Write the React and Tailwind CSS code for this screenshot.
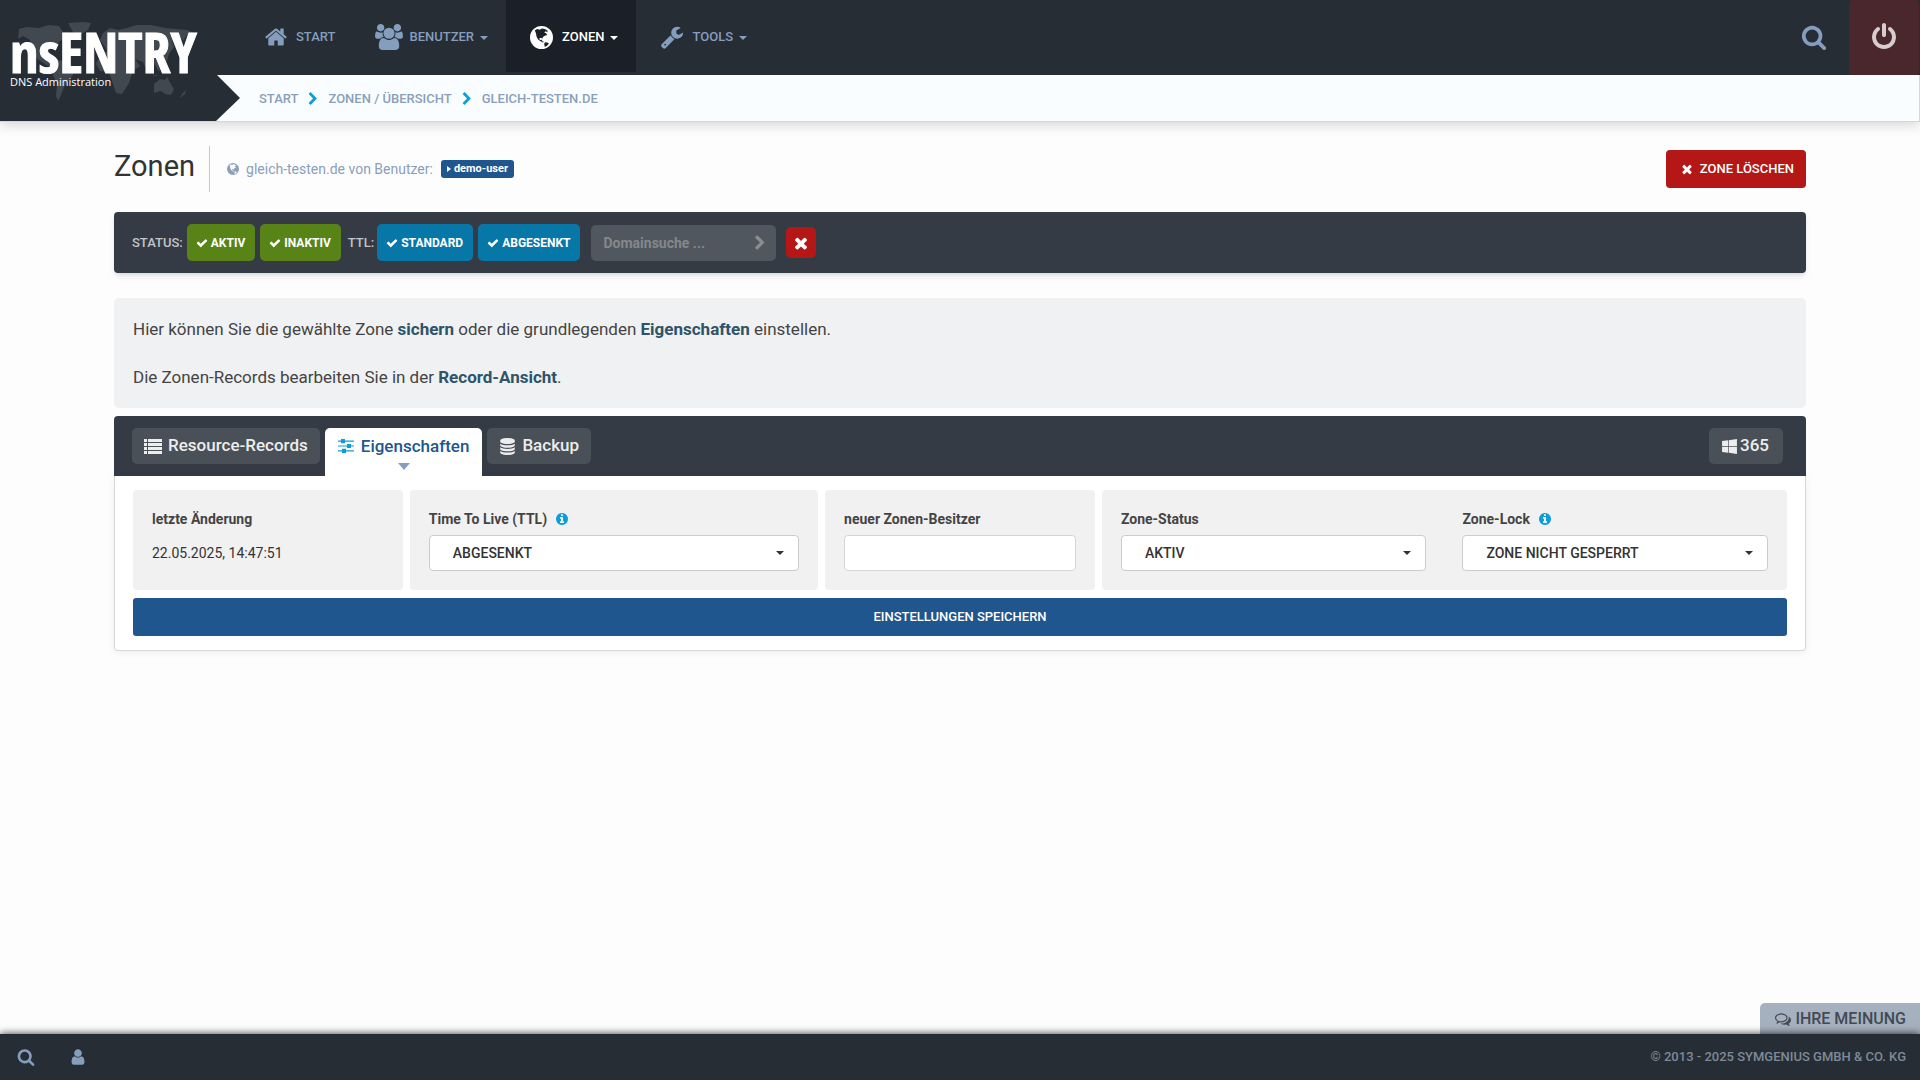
import { FaWindows } from 'react-icons/fa';
import clsx from 'clsx';

const ICONS = {
  home: 'M1472 992v480q0 26-19 45t-45 19h-384v-384h-256v384h-384q-26 0-45-19t-19-45v-480q0-1 .5-3t.5-3l575-474 575 474q1 2 1 6zm223-69l-62 74q-8 9-21 11h-3q-13 0-21-7l-692-577-692 577q-12 8-24 7-13-2-21-11l-62-74q-8-10-7-23.5t11-21.5l719-599q32-26 76-26t76 26l244 204v-195q0-14 9-23t23-9h192q14 0 23 9t9 23v408l219 182q10 8 11 21.5t-7 23.5z',
  users:
    'M593 896q-162 5-265 128h-134q-82 0-138-40.5t-56-118.5q0-353 124-353 6 0 43.5 21t97.5 42.5 119 21.5q67 0 133-23-5 37-5 66 0 139 81 256zm1071 637q0 120-73 189.5t-194 69.5h-874q-121 0-194-69.5t-73-189.5q0-53 3.5-103.5t14-109 26.5-108.5 43-97.5 62-81 85.5-53.5 111.5-20q10 0 43 21.5t73 48 107 48 135 21.5 135-21.5 107-48 73-48 43-21.5q61 0 111.5 20t85.5 53.5 62 81 43 97.5 26.5 108.5 14 109 3.5 103.5zm-1024-1277q0 106-75 181t-181 75-181-75-75-181 75-181 181-75 181 75 75 181zm704 384q0 159-112.5 271.5t-271.5 112.5-271.5-112.5-112.5-271.5 112.5-271.5 271.5-112.5 271.5 112.5 112.5 271.5zm576 225q0 78-56 118.5t-138 40.5h-134q-103-123-265-128 81-117 81-256 0-29-5-66 66 23 133 23 59 0 119-21.5t97.5-42.5 43.5-21q124 0 124 353zm-128-609q0 106-75 181t-181 75-181-75-75-181 75-181 181-75 181 75 75 181z',
  wrench:
    'M448 1472q0-26-19-45t-45-19-45 19-19 45 19 45 45 19 45-19 19-45zm644-420l-682 682q-37 37-90 37-52 0-91-37l-106-108q-38-36-38-90 0-53 38-91l681-681q39 98 114.5 173.5t173.5 114.5zm634-435q0 39-23 106-47 134-164.5 217.5t-258.5 83.5q-185 0-316.5-131.5t-131.5-316.5 131.5-316.5 316.5-131.5q58 0 121.5 16.5t107.5 46.5q16 11 16 28t-16 28l-293 169v224l193 107q5-3 79-48.5t135.5-81 70.5-35.5q15 0 23.5 10t8.5 25z',
  search:
    'M1216 832q0-185-131.5-316.5t-316.5-131.5-316.5 131.5-131.5 316.5 131.5 316.5 316.5 131.5 316.5-131.5 131.5-316.5zm512 832q0 52-38 90t-90 38q-54 0-90-38l-343-342q-179 124-399 124-143 0-273.5-55.5t-225-150-150-225-55.5-273.5 55.5-273.5 150-225 225-150 273.5-55.5 273.5 55.5 225 150 150 225 55.5 273.5q0 220-124 399l343 343q37 37 37 90z',
  power:
    'M1664 896q0 156-61 298t-164 245-245 164-298 61-298-61-245-164-164-245-61-298q0-182 80.5-343t226.5-270q43-32 95.5-25t83.5 50q32 42 24.5 94.5t-49.5 84.5q-98 74-151.5 181t-53.5 228q0 104 40.5 198.5t109.5 163.5 163.5 109.5 198.5 40.5 198.5-40.5 163.5-109.5 109.5-163.5 40.5-198.5q0-121-53.5-228t-151.5-181q-42-32-49.5-84.5t24.5-94.5q31-43 84-50t95 25q146 109 226.5 270t80.5 343zm-640-768v640q0 52-38 90t-90 38-90-38-38-90v-640q0-52 38-90t90-38 90 38 38 90z',
  check:
    'M1671 566q0 40-28 68l-724 724-136 136q-28 28-68 28t-68-28l-136-136-362-362q-28-28-28-68t28-68l136-136q28-28 68-28t68 28l294 295 656-657q28-28 68-28t68 28l136 136q28 28 28 68z',
  times:
    'M1490 1322q0 40-28 68l-136 136q-28 28-68 28t-68-28l-294-294-294 294q-28 28-68 28t-68-28l-136-136q-28-28-28-68t28-68l294-294-294-294q-28-28-28-68t28-68l136-136q28-28 68-28t68 28l294 294 294-294q28-28 68-28t68 28l136 136q28 28 28 68t-28 68l-294 294 294 294q28 28 28 68z',
  chevron:
    'M1363 877l-742 742q-19 19-45 19t-45-19l-166-166q-19-19-19-45t19-45l531-531-531-531q-19-19-19-45t19-45l166-166q19-19 45-19t45 19l742 742q19 19 19 45t-19 45z',
  user: 'M1536 1399q0 109-62.5 187t-150.5 78h-854q-88 0-150.5-78t-62.5-187q0-85 8.5-160.5t31.5-152 58.5-131 94-89 134.5-34.5q131 128 313 128t313-128q76 0 134.5 34.5t94 89 58.5 131 31.5 152 8.5 160.5zm-256-887q0 159-112.5 271.5t-271.5 112.5-271.5-112.5-112.5-271.5 112.5-271.5 271.5-112.5 271.5 112.5 112.5 271.5z',
  info: 'M1152 1376v-160q0-14-9-23t-23-9h-96v-512q0-14-9-23t-23-9h-320q-14 0-23 9t-9 23v160q0 14 9 23t23 9h96v320h-96q-14 0-23 9t-9 23v160q0 14 9 23t23 9h448q14 0 23-9t9-23zm-128-896v-160q0-14-9-23t-23-9h-192q-14 0-23 9t-9 23v160q0 14 9 23t23 9h192q14 0 23-9t9-23zm640 416q0 209-103 385.5t-279.5 279.5-385.5 103-385.5-103-279.5-279.5-103-385.5 103-385.5 279.5-279.5 385.5-103 385.5 103 279.5 279.5 103 385.5z',
  database:
    'M896 768q237 0 443-43t325-127v170q0 69-103 128t-280 93.5-385 34.5-385-34.5-280-93.5-103-128v-170q119 84 325 127t443 43zm0 768q237 0 443-43t325-127v170q0 69-103 128t-280 93.5-385 34.5-385-34.5-280-93.5-103-128v-170q119 84 325 127t443 43zm0-384q237 0 443-43t325-127v170q0 69-103 128t-280 93.5-385 34.5-385-34.5-280-93.5-103-128v-170q119 84 325 127t443 43zm0-1152q208 0 385 34.5t280 93.5 103 128v128q0 69-103 128t-280 93.5-385 34.5-385-34.5-280-93.5-103-128v-128q0-69 103-128t280-93.5 385-34.5z',
  comments:
    'M704 384q-153 0-286 52t-211.5 141-78.5 191q0 82 53 158t149 132l97 56-35 84q34-20 62-39l44-31 53 10q78 14 153 14 153 0 286-52t211.5-141 78.5-191-78.5-191-211.5-141-286-52zm0-128q191 0 353.5 68.5t256.5 186.5 94 257-94 257-256.5 186.5-353.5 68.5q-86 0-176-16-124 88-278 128-36 9-86 16h-3q-11 0-20.5-8t-11.5-21q-1-3-1-6.5t.5-6.5 2-6l2.5-5 3.5-5.5 4-5 4.5-5 4-4.5q5-6 23-25t26-29.5 22.5-29 25-38.5 20.5-44q-124-72-195-177t-71-224q0-139 94-257t256.5-186.5 353.5-68.5zm822 1169q10 24 20.5 44t25 38.5 22.5 29 26 29.5 23 25q1 1 4 4.5t4.5 5 4 5 3.5 5.5l2.5 5 2 6 .5 6.5-1 6.5q-3 14-13 22t-22 7q-50-7-86-16-154-40-278-128-90 16-176 16-271 0-472-132 58 4 88 4 161 0 309-45t264-129q125-92 192-212t67-254q0-77-23-152 129 71 204 178t75 230q0 120-71 224.5t-195 176.5z',
};

function Icon({ name, className, viewBox = '0 0 1792 1792' }) {
  return (
    <svg viewBox={viewBox} fill="currentColor" aria-hidden="true" className={clsx('shrink-0', className)}>
      <path d={ICONS[name]} />
    </svg>
  );
}

function GlobeIcon({ className }) {
  return (
    <svg viewBox="0 0 24 24" fill="currentColor" aria-hidden="true" className={clsx('shrink-0', className)}>
      <path
        fillRule="evenodd"
        d="M12 0a12 12 0 1 0 0 24 12 12 0 0 0 0-24zM5 4.500L7.500 3.200 10 3.800 12.500 2.600 15.500 3 18.500 5 18 6.500 16.500 5.500 14.800 6.500 17 7.800 18 9.500 15.500 10.300 13.500 11.500 12.800 13.300 11.500 12.200 9.700 13 10.300 14.600 12.300 14.300 12.800 16 14.500 16.500 13.500 17.300 11 15.800 8.500 14 6.800 11 6.200 7.500zM15.500 17L18 17.200 19.800 18.200 17.800 20.500 15.500 22 14.800 19z"
      />
    </svg>
  );
}

function SlidersIcon({ className }) {
  return (
    <svg viewBox="0 0 16 14" fill="currentColor" aria-hidden="true" className={clsx('shrink-0', className)}>
      <path d="M0 1.500h3v-1.500h4v1.500h9v1.200h-9v1.500h-4v-1.500h-3zM0 6.400h9v-1.500h4v1.500h3v1.200h-3v1.500h-4v-1.500h-9zM0 11.300h4v-1.500h4v1.500h8v1.200h-8v1.500h-4v-1.500h-4z" />
    </svg>
  );
}

function ListIcon({ className }) {
  return (
    <svg viewBox="0 0 18 15" fill="currentColor" aria-hidden="true" className={clsx('shrink-0', className)}>
      {[0, 4, 8, 12].map((y) => (
        <path key={y} d={`M0 ${y}h3v3h-3zM4 ${y}h14v3h-14z`} />
      ))}
    </svg>
  );
}

function Caret({ className }) {
  return (
    <svg viewBox="0 0 8 4" fill="currentColor" aria-hidden="true" className={clsx('h-1 w-2 shrink-0', className)}>
      <path d="M0 0h8L4 4z" />
    </svg>
  );
}

function WorldMap() {
  return (
    <svg
      viewBox="0 0 180 90"
      fill="#42484f"
      aria-hidden="true"
      className="absolute top-5 left-4 h-[90px] w-[180px]"
    >
      <path d="M3 9l8-2 12 1 10-3 10 1 4 6 8 1-3 5-8 3-5 6-5 1-2 5 4 4 6 3 6 1 10 6 1 5-6 8-5 7-3 8-3 6-2-5 1-12-4-9 1-6-9-5-8-5-6-10-1-9-7-4-5 3z" />
      <path d="M52 3l15-1 8 1-3 7-8 5-5 3-2-6z" />
      <path d="M84 20l3-7 7-5 8 2 9-2 10-3 14 0 14 3 22 2 7 3-7 2-4 6-3-4-8 4 2 6-5 7-2 7-6 5-2 6-4-7-3-2-5 8-4-9-8-3 5 7-7 5-4 12-7 11-6-1-4-12-3-9-9-1-4-7 4-8 7-5-2-4z" />
      <path d="M138 64l6-5 5 1 2-3 4 7 3 5-3 6-6-1-4-3-7 2z" />
      <path d="M133 50l5 5 6 1-6 0zM105 60l3-3-2 8-2-1zM166 74l4-4-1 4-5 4z" />
    </svg>
  );
}

function Logo() {
  return (
    <a
      href="#start"
      aria-label="nsENTRY DNS Administration"
      className="relative block w-60 shrink-0 bg-[#262d35] [clip-path:polygon(0_0,100%_0,100%_75px,217px_75px,100%_98px,216px_121px,0_121px)]"
    >
      <WorldMap />
      <div className="relative pt-[26px] pl-2.5 text-white">
        <div className="font-['Open_Sans_Condensed','Liberation_Sans_Narrow','Open_Sans',sans-serif] text-[56px] leading-[50px] font-extrabold [-webkit-text-stroke:1px_white]">
          nsENTRY
        </div>
        <div className="font-['Open_Sans',sans-serif] text-[11px] leading-3">DNS Administration</div>
      </div>
    </a>
  );
}

function NavItem({ icon, label, active, dropdown }) {
  return (
    <a
      href={`#${label.toLowerCase()}`}
      className={clsx(
        'flex h-[72px] items-center pt-0.5 pl-6 text-[13px] font-medium',
        dropdown ? 'pr-[18px]' : 'pr-4',
        active ? 'bg-[#1b1f27] text-white' : 'text-[#859ebe]'
      )}
    >
      {icon}
      {label}
      {dropdown && <Caret className="mt-0.5 ml-1.5" />}
    </a>
  );
}

function Header() {
  return (
    <header className="flex h-[122px] border-b border-[#d3d7db] bg-[#fafdff] shadow-[0_3px_12px_rgba(0,0,0,0.16)]">
      <Logo />
      <div className="min-w-0 flex-1">
        <div className="flex h-[75px] bg-[#262d35]">
          <nav className="flex">
            <NavItem icon={<Icon name="home" className="mr-2 size-6" />} label="START" />
            <NavItem
              icon={<Icon name="users" viewBox="0 0 1920 1792" className="mr-1.5 h-[26px] w-7" />}
              label="BENUTZER"
              dropdown
            />
            <NavItem icon={<GlobeIcon className="mr-[9px] size-[23px]" />} label="ZONEN" active dropdown />
            <NavItem icon={<Icon name="wrench" className="mr-2 size-6" />} label="TOOLS" dropdown />
          </nav>
          <button type="button" aria-label="Suche" className="ml-auto px-[22px] pb-0.5 text-[#859ebe]">
            <Icon name="search" className="size-[26px]" />
          </button>
          <button
            type="button"
            aria-label="Abmelden"
            className="mr-px flex w-[70px] items-center justify-center rounded bg-[#4a272d] pb-0.5 text-[#d6cdcf]"
          >
            <Icon name="power" className="size-7" />
          </button>
        </div>
        <nav
          aria-label="Breadcrumb"
          className="flex h-[46px] items-center gap-2 border-r border-[#d3d7db] pt-0.5 pl-[19px] text-[13px] font-medium text-[#8a9fba]"
        >
          <a href="#start">START</a>
          <Icon name="chevron" className="size-3.5 text-[#0d9ddb]" />
          <a href="#zonen">ZONEN / ÜBERSICHT</a>
          <Icon name="chevron" className="size-3.5 text-[#0d9ddb]" />
          <a href="#zone">GLEICH-TESTEN.DE</a>
        </nav>
      </div>
    </header>
  );
}

function PageTitle() {
  return (
    <div className="flex items-center">
      <h1 className="pb-1.5 text-[29px] leading-9 text-[#333]">Zonen</h1>
      <div className="ml-3.5 flex h-[46px] items-center border-l border-[#c5c9ce] pl-[17px] text-sm text-[#8a9fba]">
        <GlobeIcon className="mr-[7px] size-3" />
        gleich-testen.de von Benutzer:
        <a
          href="#demo-user"
          className="ml-2 flex h-[18px] items-center gap-[3px] rounded-[3px] bg-[#20568e] px-1.5 text-[11px] font-bold text-white"
        >
          <svg viewBox="0 0 4 6" fill="currentColor" aria-hidden="true" className="h-1.5 w-1">
            <path d="M0 0l4 3-4 3z" />
          </svg>
          demo-user
        </a>
      </div>
      <button
        type="button"
        className="ml-auto flex h-[38px] items-center gap-1.5 rounded bg-[#b51717] pr-3 pl-3.5 text-[13px] font-medium text-white"
      >
        <Icon name="times" className="size-3.5" />
        ZONE LÖSCHEN
      </button>
    </div>
  );
}

function FilterButton({ label, color }) {
  return (
    <button
      type="button"
      className={clsx(
        'flex h-[37px] items-center gap-[3px] rounded-[5px] pr-[10px] pl-[9px] text-xs font-bold text-white',
        color === 'green' ? 'bg-[#588417]' : 'bg-[#0777a8]'
      )}
    >
      <Icon name="check" className="size-3" />
      {label}
    </button>
  );
}

function FilterBar() {
  return (
    <section className="mt-5 flex h-[61px] items-center rounded bg-[#343b45] px-[18px] text-[13px] font-medium text-[#c3c5c8] shadow-md">
      <span>STATUS:</span>
      <div className="mr-[7px] ml-1 flex gap-[5px]">
        <FilterButton label="AKTIV" color="green" />
        <FilterButton label="INAKTIV" color="green" />
      </div>
      <span>TTL:</span>
      <div className="mr-[11px] ml-[3px] flex gap-[5px]">
        <FilterButton label="STANDARD" color="blue" />
        <FilterButton label="ABGESENKT" color="blue" />
      </div>
      <div className="flex h-9 w-[185px] items-center rounded-[5px] bg-[#51575f] pr-2 pl-3 text-[#8b8e91]">
        <input
          type="text"
          aria-label="Domainsuche"
          placeholder="Domainsuche ..."
          className="min-w-0 flex-1 bg-transparent text-sm font-bold outline-none placeholder:text-[#84888c]"
        />
        <Icon name="chevron" className="size-4" />
      </div>
      <button
        type="button"
        aria-label="Filter zurücksetzen"
        className="ml-2.5 flex h-[31px] w-[30px] items-center justify-center rounded-[5px] bg-[#b51717] text-white"
      >
        <Icon name="times" className="size-[18px]" />
      </button>
    </section>
  );
}

function Tab({ icon, label }) {
  return (
    <button
      type="button"
      className="flex h-9 items-center gap-1.5 rounded-[5px] bg-[#495057] px-3 text-[17px] font-medium text-[#ededed]"
    >
      {icon}
      {label}
    </button>
  );
}

function Select({ id, value }) {
  return (
    <div className="relative">
      <select
        id={id}
        defaultValue={value}
        className="h-9 w-full appearance-none rounded border border-[#ccc] bg-white pr-8 pl-[23px] text-sm font-medium text-[#333]"
      >
        <option>{value}</option>
      </select>
      <Caret className="pointer-events-none absolute top-4 right-[15px] text-[#333]" />
    </div>
  );
}

function Label({ htmlFor, info, children }) {
  return (
    <label htmlFor={htmlFor} className="mb-1.5 flex h-5 items-center gap-2 text-sm font-bold text-[#444]">
      {children}
      {info && <Icon name="info" className="size-[14px] text-[#0d9ddb]" />}
    </label>
  );
}

function ZonePanel() {
  return (
    <section className="mt-2">
      <div className="flex h-[60px] items-center gap-[5px] rounded-t bg-[#343b45] pr-[23px] pl-[18px]">
        <Tab icon={<ListIcon className="h-[15px] w-[18px]" />} label="Resource-Records" />
        <button
          type="button"
          className="relative flex h-12 items-start self-end rounded-t-[5px] bg-white px-[13px] pt-1.5 text-[17px] font-medium text-[#20568e]"
        >
          <span className="flex items-center gap-[7px] leading-6">
            <SlidersIcon className="h-3.5 w-4 text-[#0d9ddb]" />
            Eigenschaften
          </span>
          <svg
            viewBox="0 0 12 7"
            fill="#859ebe"
            aria-hidden="true"
            className="absolute bottom-1.5 left-1/2 h-[7px] w-3 -translate-x-1/2"
          >
            <path d="M0 0h12L6 7z" />
          </svg>
        </button>
        <Tab icon={<Icon name="database" className="size-[17px]" />} label="Backup" />
        <button
          type="button"
          className="ml-auto flex h-9 items-center gap-0.5 rounded-[5px] bg-[#495057] pr-3.5 pl-3 text-[17px] font-medium text-[#ededed]"
        >
          <FaWindows className="size-[17px]" aria-hidden="true" />
          365
        </button>
      </div>
      <form className="rounded-b border border-t-0 border-[#d5d7da] bg-white px-[18px] py-3.5 shadow-[0_2px_8px_rgba(0,0,0,0.06)]">
        <div className="grid grid-cols-12 gap-[7px]">
          <div className="col-span-2 rounded bg-[#f1f1f1] p-[19px] text-sm text-[#333]">
            <div className="mb-1.5 h-5 font-bold text-[#444]">letzte Änderung</div>
            <div className="leading-9">22.05.2025, 14:47:51</div>
          </div>
          <div className="col-span-3 rounded bg-[#f1f1f1] p-[19px]">
            <Label htmlFor="ttl" info>
              Time To Live (TTL)
            </Label>
            <Select id="ttl" value="ABGESENKT" />
          </div>
          <div className="col-span-2 rounded bg-[#f1f1f1] p-[19px]">
            <Label htmlFor="owner">neuer Zonen-Besitzer</Label>
            <input
              id="owner"
              type="text"
              className="block h-9 w-full rounded border border-[#d5d5d5] bg-white px-3 text-sm"
            />
          </div>
          <div className="col-span-5 grid grid-cols-2 gap-9 rounded bg-[#f1f1f1] p-[19px]">
            <div>
              <Label htmlFor="status">Zone-Status</Label>
              <Select id="status" value="AKTIV" />
            </div>
            <div>
              <Label htmlFor="lock" info>
                Zone-Lock
              </Label>
              <Select id="lock" value="ZONE NICHT GESPERRT" />
            </div>
          </div>
        </div>
        <button
          type="button"
          className="mt-2 h-[38px] w-full rounded-[3px] bg-[#20568e] text-[13px] font-medium text-white"
        >
          EINSTELLUNGEN SPEICHERN
        </button>
      </form>
    </section>
  );
}

function Footer() {
  return (
    <>
      <button
        type="button"
        className="mt-auto flex h-[31px] items-center gap-1 self-end rounded-tl-[5px] bg-[#a6b1bf] pr-3.5 pl-[15px] text-base font-medium text-[#424a54]"
      >
        <Icon name="comments" className="size-4" />
        IHRE MEINUNG
      </button>
      <footer className="relative flex h-[46px] items-center bg-[#262d35] pr-3.5 pl-[17px] text-[#859ebe] shadow-[0_0_8px_rgba(0,0,0,0.8)]">
        <button type="button" aria-label="Suche">
          <Icon name="search" className="size-[18px]" />
        </button>
        <button type="button" aria-label="Benutzer" className="ml-[34px]">
          <Icon name="user" className="size-[18px]" />
        </button>
        <span className="ml-auto text-[13px] font-medium text-[#7e8a98]">
          © 2013 - 2025 SYMGENIUS GMBH &amp; CO. KG
        </span>
      </footer>
    </>
  );
}

export default function App() {
  return (
    <div className="flex min-h-screen flex-col bg-[#fdfdfe] font-['Roboto',sans-serif]">
      <Header />
      <main className="px-[114px] pt-6">
        <PageTitle />
        <FilterBar />
        <section className="mt-[25px] rounded-[5px] bg-[#f0f1f3] p-[19px] text-[17px] leading-6 text-[#444]">
          <p>
            Hier können Sie die gewählte Zone <b className="text-[#2f5468]">sichern</b> oder die grundlegenden{' '}
            <b className="text-[#2f5468]">Eigenschaften</b> einstellen.
          </p>
          <p className="mt-6">
            Die Zonen-Records bearbeiten Sie in der <b className="text-[#2f5468]">Record-Ansicht</b>.
          </p>
        </section>
        <ZonePanel />
      </main>
      <Footer />
    </div>
  );
}
